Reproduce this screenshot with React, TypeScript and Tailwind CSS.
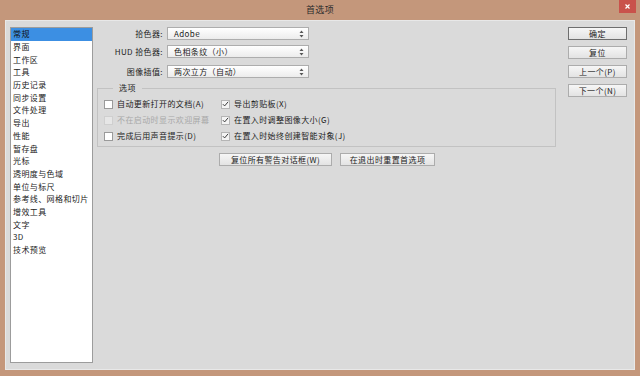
import React from "react";

const font = { fontFamily: '"Noto Sans CJK SC", "Liberation Sans", sans-serif' };

const categories = [
  "常规", "界面", "工作区", "工具", "历史记录", "同步设置", "文件处理", "导出", "性能",
  "暂存盘", "光标", "透明度与色域", "单位与标尺", "参考线、网格和切片", "增效工具", "文字", "3D", "技术预览",
];

function Spinner() {
  return (
    <svg width="5" height="8" viewBox="0 0 5 8" className="shrink-0">
      <path d="M2.5 0.5 L4.5 3 L0.5 3 Z" fill="#555" />
      <path d="M2.5 7.5 L4.5 5 L0.5 5 Z" fill="#555" />
    </svg>
  );
}

function Select({ label, value, className }: { label: string; value: string; className?: string }) {
  return (
    <div className={"flex items-center h-[13px] " + (className ?? "")}>
      <div className="w-[67px] text-right text-[8px] text-[#222] pr-[1px]">{label}</div>
      <div className="ml-[3px] w-[142px] h-[13px] flex items-center justify-between border border-[#adadad] bg-gradient-to-b from-white to-[#ececec] pl-[6px] pr-[4px] text-[8px] text-[#222]">
        <span>{value}</span>
        <Spinner />
      </div>
    </div>
  );
}

function Check({ label, checked, disabled }: { label: string; checked?: boolean; disabled?: boolean }) {
  return (
    <div className="flex items-center h-[16px]">
      <div className={"w-[9px] h-[9px] border flex items-center justify-center " + (disabled ? "border-[#cfcfcf] bg-[#e6e6e6]" : checked ? "border-[#b5b5b5] bg-[#f4f4f4]" : "border-[#9a9a9a] bg-white")}>
        {checked && (
          <svg width="8" height="8" viewBox="0 0 8 8">
            <path d="M1 4.2 L3 6.2 L7 1.5" stroke="#333" strokeWidth="1.1" fill="none" />
          </svg>
        )}
      </div>
      <span className={"ml-[4px] text-[8px] " + (disabled ? "text-[#a8a8a8]" : "text-[#222]")}>{label}</span>
    </div>
  );
}

function Btn({ children, primary, className }: { children: React.ReactNode; primary?: boolean; className?: string }) {
  return (
    <div className={"h-[13px] flex items-center justify-center text-[8px] text-[#222] bg-gradient-to-b from-[#f6f6f6] to-[#e3e3e3] border " + (primary ? "border-[#6e6e6e]" : "border-[#acacac]") + " " + (className ?? "")}>
      {children}
    </div>
  );
}

export default function App() {
  return (
    <div className="w-[640px] h-[376px] bg-[#c4977b] flex flex-col overflow-hidden tracking-[0.4px]" style={font}>
      <div className="h-[20px] relative flex items-center justify-center">
        <span className="text-[9px] text-[#2b2b2b] -mt-[1px]">首选项</span>
        <div className="absolute right-[4px] top-0 w-[17px] h-[13px] bg-[#c9524b] flex items-center justify-center">
          <svg width="5" height="5" viewBox="0 0 5 5">
            <path d="M0.5 0.5 L4.5 4.5 M4.5 0.5 L0.5 4.5" stroke="#fff" strokeWidth="1.2" />
          </svg>
        </div>
      </div>
      <div className="mx-[5px] mb-[6px] flex-1 bg-[#dadada] border border-[#e8e8e8] flex pt-[6px] pl-[4px] pr-[7px]">
        <div className="w-[83px] h-[336px] bg-white border border-[#9c9c9c]">
          {categories.map((c, i) => (
            <div
              key={c}
              className={"h-[12.7px] flex items-center pl-[2px] text-[8px] " + (i === 0 ? "bg-[#3c8fe3] text-[#111]" : "text-[#222]")}
            >
              {c}
            </div>
          ))}
        </div>
        <div className="ml-[4px] w-[459px] flex flex-col">
          <Select label="拾色器:" value="Adobe" />
          <Select label="HUD 拾色器:" value="色相条纹（小）" className="mt-[5px]" />
          <Select label="图像插值:" value="两次立方（自动）" className="mt-[7px]" />
          <fieldset className="mt-[5px] h-[64px] border border-[#c2c2c2] px-[6px]">
            <legend className="ml-[9px] px-[6px] text-[8px] text-[#222] leading-[10px]">选项</legend>
            <div className="flex mt-[3px]">
              <div className="w-[117px] flex flex-col">
                <Check label="自动更新打开的文档(A)" />
                <Check label="不在启动时显示欢迎屏幕" disabled />
                <Check label="完成后用声音提示(D)" />
              </div>
              <div className="flex flex-col">
                <Check label="导出剪贴板(X)" checked />
                <Check label="在置入时调整图像大小(G)" checked />
                <Check label="在置入时始终创建智能对象(J)" checked />
              </div>
            </div>
          </fieldset>
          <div className="flex mt-[6px] ml-[122px] gap-[8px]">
            <Btn className="w-[113px]">复位所有警告对话框(W)</Btn>
            <Btn className="w-[95px]">在退出时重置首选项</Btn>
          </div>
        </div>
        <div className="ml-auto w-[59px] flex flex-col gap-[6px]">
          <Btn primary>确定</Btn>
          <Btn>复位</Btn>
          <Btn>上一个(P)</Btn>
          <Btn>下一个(N)</Btn>
        </div>
      </div>
    </div>
  );
}
